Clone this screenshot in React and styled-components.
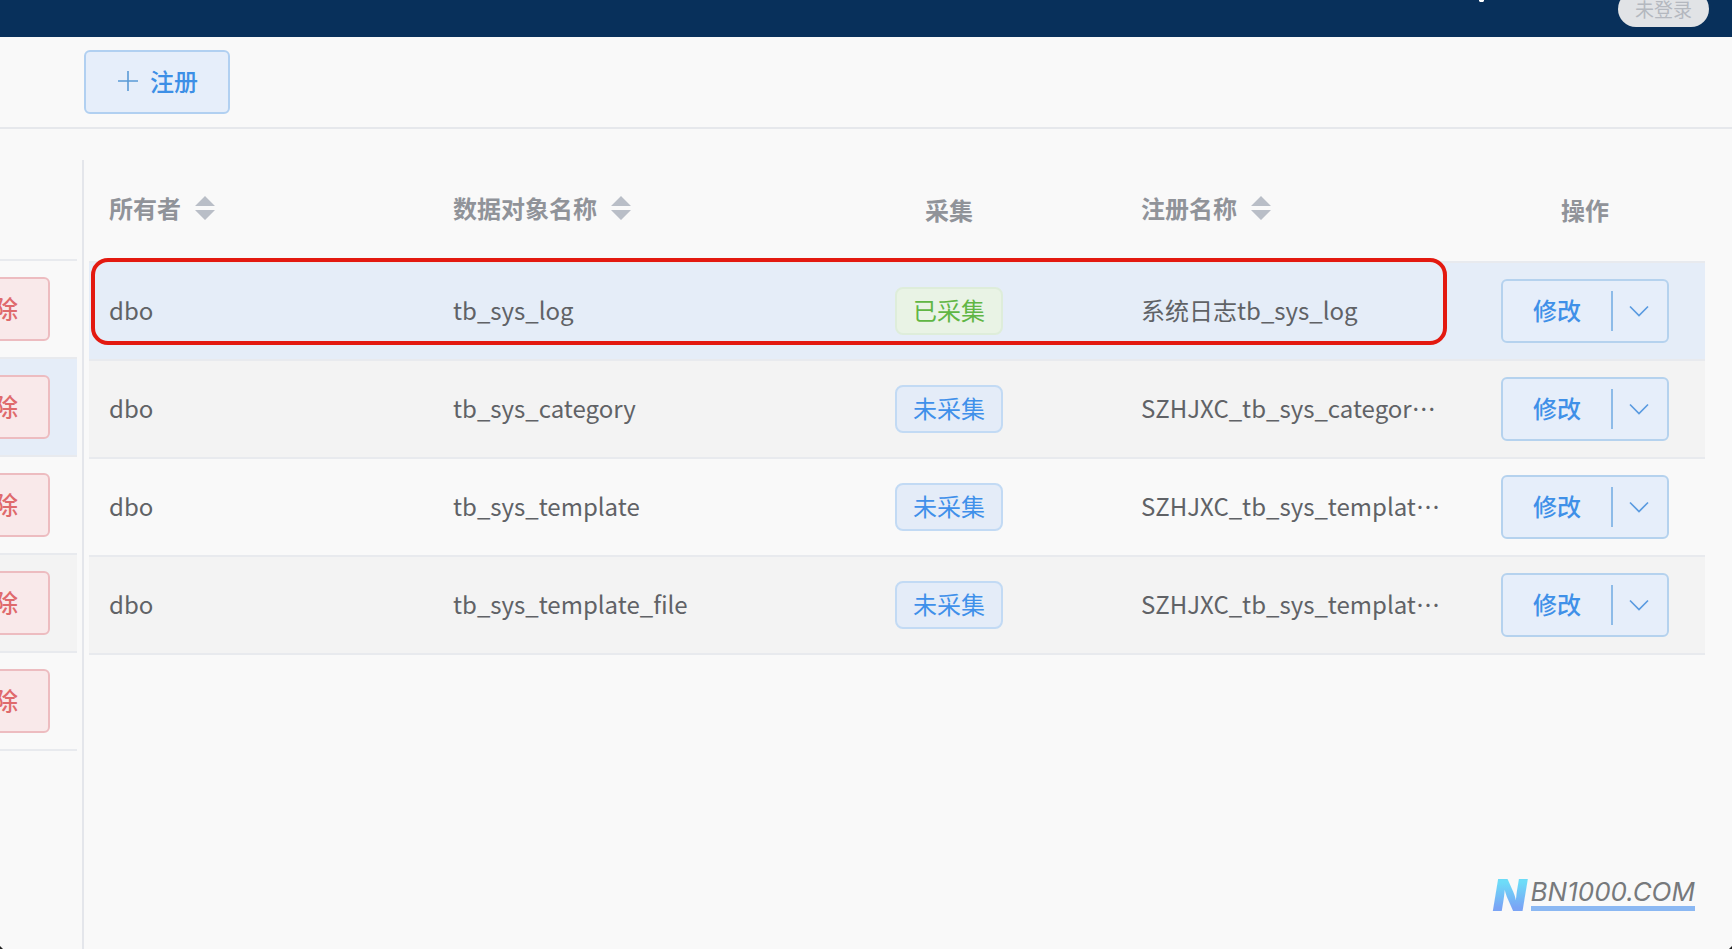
import React from 'react';
import styled, { createGlobalStyle } from 'styled-components';

const GlobalStyle = createGlobalStyle`
  * {
    box-sizing: border-box;
  }

  body {
    margin: 0;
    background-color: #f9f9f9;
    color: #606266;
    font-family: 'Noto Sans CJK SC', sans-serif;
    font-size: 24px;
    line-height: 36px;
  }

  button {
    font-family: inherit;
    font-size: inherit;
    line-height: inherit;
    cursor: pointer;
  }
`;

const Page = styled.div`
  position: relative;
  display: flex;
  flex-direction: column;
  min-height: 100vh;
  overflow: hidden;
`;

const TopBar = styled.header`
  display: flex;
  justify-content: flex-end;
  align-items: flex-end;
  height: 37px;
  padding: 0 23px 10px;
  background-color: #08305b;
`;

const TopMark = styled.svg`
  align-self: flex-start;
  flex-shrink: 0;
  margin-right: 132px;
`;

const LoginState = styled.span`
  flex-shrink: 0;
  padding: 0 17px;
  border-radius: 18px;
  background-color: #e1e3e6;
  color: #b4b8bf;
  font-size: 19px;
`;

const Toolbar = styled.div`
  padding: 13px 84px;
  border-bottom: 2px solid #e6e8ec;
`;

const RegisterButton = styled.button`
  display: flex;
  align-items: center;
  gap: 10px;
  height: 64px;
  padding: 0 30px 2px;
  border: 2px solid #b1d0f1;
  border-radius: 6px;
  background-color: #e6eefa;
  color: #3d8fe6;
  font-weight: 500;
`;

const Content = styled.main`
  display: flex;
  flex: 1;
  padding: 31px 27px 0 0;
`;

const SidePanel = styled.aside`
  width: 84px;
  padding-right: 5px;
  border-right: 2px solid #e4e6eb;
  overflow: hidden;
`;

const SideHead = styled.div`
  height: 101px;
  border-bottom: 2px solid #e8eaee;
`;

const SideList = styled.ul`
  margin: 0;
  padding: 0;
  list-style: none;
`;

const rowColors = {
  plain: '#f9f9f9',
  striped: '#f3f3f3',
  current: '#e5edf8',
};

const SideItem = styled.li`
  display: flex;
  justify-content: flex-end;
  align-items: center;
  height: 98px;
  padding-right: 27px;
  border-bottom: 2px solid #e8eaee;
  background-color: ${(props) => rowColors[props.$tone]};
`;

const DeleteButton = styled.button`
  flex-shrink: 0;
  height: 64px;
  padding: 0 30px 2px;
  border: 2px solid #edbcc0;
  border-radius: 6px;
  background-color: #f9e9ea;
  color: #df6a6c;
  font-weight: 500;
`;

const TablePanel = styled.section`
  position: relative;
  flex: 1;
  min-width: 0;
  margin-left: 5px;
`;

const Table = styled.table`
  width: 100%;
  table-layout: fixed;
  border-spacing: 0;
`;

const HeadCell = styled.th`
  width: ${(props) => props.$width || 'auto'};
  height: 103px;
  padding: 0 20px 2px;
  border-bottom: 2px solid #e8eaee;
  color: #909399;
  font-weight: 700;
  text-align: ${(props) => props.$align || 'left'};
`;

const SortButton = styled.button`
  display: flex;
  align-items: center;
  gap: 14px;
  padding: 0 0 4px;
  border: none;
  background: none;
  color: inherit;
  font-weight: inherit;
`;

const Row = styled.tr`
  background-color: ${(props) => rowColors[props.$tone]};
`;

const Cell = styled.td`
  height: 98px;
  padding: 0 20px 2px;
  border-bottom: 2px solid #e8eaee;
  overflow: hidden;
  white-space: nowrap;
`;

const ControlCell = styled(Cell)`
  padding: 0 20px;
  text-align: center;
`;

const Tag = styled.span`
  display: inline-flex;
  align-items: center;
  height: 48px;
  padding: 0 16px 2px;
  border: 2px solid ${(props) => (props.$done ? '#deedda' : '#c2daf4')};
  border-radius: 8px;
  background-color: ${(props) => (props.$done ? '#e9f3e5' : '#e4ecf8')};
  color: ${(props) => (props.$done ? '#60b644' : '#3f90ea')};
  vertical-align: middle;
`;

const SplitButton = styled.div`
  display: inline-flex;
  align-items: center;
  height: 64px;
  border: 2px solid #b5d2ee;
  border-radius: 6px;
  background-color: #e6eefa;
  vertical-align: middle;
`;

const EditButton = styled.button`
  height: 60px;
  padding: 0 30px 2px;
  border: none;
  background: none;
  color: #3f90e8;
  font-weight: 500;
`;

const MoreButton = styled.button`
  display: flex;
  justify-content: center;
  align-items: center;
  width: 56px;
  height: 40px;
  padding: 0 2px 0 0;
  border: none;
  border-left: 2px solid #8dbbe8;
  background: none;
  color: #5a9be0;
`;

const Highlight = styled.div`
  position: absolute;
  top: 98px;
  left: 2px;
  right: 258px;
  height: 87px;
  border: 4px solid #e31910;
  border-radius: 17px;
  pointer-events: none;
`;

const Brand = styled.div`
  position: absolute;
  right: 37px;
  bottom: 38px;
  display: flex;
  align-items: flex-end;
  gap: 2px;
`;

const BrandMark = styled.span`
  padding: 0 2px;
  background: linear-gradient(#6ddcf8 10%, #7aa4f5 90%);
  background-clip: text;
  color: transparent;
  font-family: Inter, sans-serif;
  font-size: 44px;
  font-style: italic;
  font-weight: 900;
  line-height: 32px;
`;

const BrandName = styled.span`
  border-bottom: 5px solid #8bb8f3;
  color: #77797c;
  font-family: Inter, sans-serif;
  font-size: 26px;
  font-style: italic;
  line-height: 28px;
`;

const Corner = styled.svg`
  position: absolute;
  bottom: 0;
  ${(props) => props.$side}: 0;
`;

const PlusIcon = () => (
  <svg width="24" height="24" viewBox="0 0 24 24" aria-hidden="true">
    <path d="M12 2v20M2 12h20" stroke="#5a9ad6" strokeWidth="1.6" fill="none" />
  </svg>
);

const SortIcon = () => (
  <svg width="20" height="24" viewBox="0 0 20 24" aria-hidden="true">
    <path d="M10 0l10 10H0zM0 14h20L10 24z" fill="#b9bec7" />
  </svg>
);

const ChevronIcon = () => (
  <svg width="20" height="12" viewBox="0 0 20 12" aria-hidden="true">
    <path d="M1 1.5l9 9 9-9" stroke="currentColor" strokeWidth="1.7" fill="none" />
  </svg>
);

const sideRows = ['plain', 'current', 'plain', 'striped', 'plain'];

const rows = [
  { owner: 'dbo', name: 'tb_sys_log', done: true, title: '系统日志tb_sys_log', tone: 'current' },
  { owner: 'dbo', name: 'tb_sys_category', done: false, title: 'SZHJXC_tb_sys_categor…', tone: 'striped' },
  { owner: 'dbo', name: 'tb_sys_template', done: false, title: 'SZHJXC_tb_sys_templat…', tone: 'plain' },
  { owner: 'dbo', name: 'tb_sys_template_file', done: false, title: 'SZHJXC_tb_sys_templat…', tone: 'striped' },
];

const SortHead = ({ children }) => (
  <HeadCell>
    <SortButton type="button">
      {children}
      <SortIcon />
    </SortButton>
  </HeadCell>
);

const App = () => {
  return (
    <Page lang="zh-CN">
      <GlobalStyle />
      <TopBar>
        <TopMark width="10" height="3" viewBox="0 0 10 3" aria-hidden="true">
          <path d="M3 0h5v1l-1 1H4L3 1z" fill="#fff" />
        </TopMark>
        <LoginState>未登录</LoginState>
      </TopBar>
      <Toolbar>
        <RegisterButton type="button">
          <PlusIcon />
          注册
        </RegisterButton>
      </Toolbar>
      <Content>
        <SidePanel>
          <SideHead />
          <SideList>
            {sideRows.map((tone, index) => (
              <SideItem key={index} $tone={tone}>
                <DeleteButton type="button">删除</DeleteButton>
              </SideItem>
            ))}
          </SideList>
        </SidePanel>
        <TablePanel>
          <Table>
            <thead>
              <tr>
                <SortHead>所有者</SortHead>
                <SortHead>数据对象名称</SortHead>
                <HeadCell $align="center">采集</HeadCell>
                <SortHead>注册名称</SortHead>
                <HeadCell $align="center" $width="240px">操作</HeadCell>
              </tr>
            </thead>
            <tbody>
              {rows.map((row) => (
                <Row key={row.name} $tone={row.tone}>
                  <Cell>{row.owner}</Cell>
                  <Cell>{row.name}</Cell>
                  <ControlCell>
                    <Tag $done={row.done}>{row.done ? '已采集' : '未采集'}</Tag>
                  </ControlCell>
                  <Cell>{row.title}</Cell>
                  <ControlCell>
                    <SplitButton>
                      <EditButton type="button">修改</EditButton>
                      <MoreButton type="button" aria-label="更多">
                        <ChevronIcon />
                      </MoreButton>
                    </SplitButton>
                  </ControlCell>
                </Row>
              ))}
            </tbody>
          </Table>
          <Highlight />
        </TablePanel>
      </Content>
      <Brand>
        <BrandMark>N</BrandMark>
        <BrandName>BN1000.COM</BrandName>
      </Brand>
      <Corner $side="left" width="3" height="3" viewBox="0 0 3 3" aria-hidden="true">
        <path d="M0 0l3 3H0z" fill="#222" />
      </Corner>
      <Corner $side="right" width="3" height="3" viewBox="0 0 3 3" aria-hidden="true">
        <path d="M3 0v3H0z" fill="#222" />
      </Corner>
    </Page>
  );
};

export default App;
